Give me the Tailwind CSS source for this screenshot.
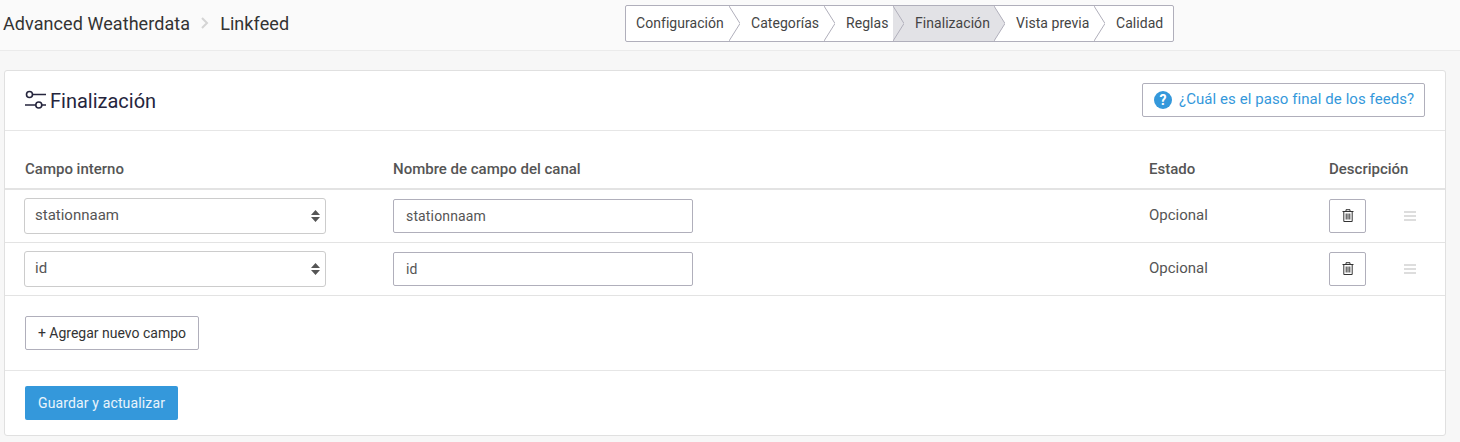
<!DOCTYPE html>
<html lang="es">
  <head>
    <meta charset="UTF-8" />
    <title>Linkfeed</title>
    <script src="https://cdn.jsdelivr.net/npm/@tailwindcss/browser@4"></script>
  </head>
  <body class="bg-[#f7f7f7] font-['Roboto',sans-serif] text-[14px] text-[#333] h-[442px] overflow-hidden">
    <!-- Top bar -->
    <header class="h-[51px] bg-[#fafafa] border-b border-[#ebebeb] flex items-start pl-[3px] relative">
      <div class="flex items-center h-[46px] text-[18px] tracking-[0.07px] text-[#333]">
        <span>Advanced Weatherdata</span>
        <svg class="mx-[11px] w-[8px] h-[12px]" viewBox="0 0 8 12" fill="none" stroke="#d4d4d4" stroke-width="2"><path d="M1 1l5 5-5 5" /></svg>
        <span>Linkfeed</span>
      </div>

      <!-- Steps -->
      <nav class="absolute left-[625px] top-[5px] h-[37px] w-[549px] flex bg-white border border-[#b0afbb] rounded-[2px] text-[#444] leading-[35px] tracking-[0.05px]">
        <div class="relative w-[103px] pl-[10px]">
          Configuración
          <svg class="absolute left-full top-0 w-[11px] h-[35px] z-10" viewBox="0 0 11 35" fill="none" stroke="#b0afbb"><path d="M0 0l11 17.5L0 35" /></svg>
        </div>
        <div class="relative w-[95px] pl-[22px]">
          Categorías
          <svg class="absolute left-full top-0 w-[11px] h-[35px] z-10" viewBox="0 0 11 35" fill="none" stroke="#b0afbb"><path d="M0 0l11 17.5L0 35" /></svg>
        </div>
        <div class="relative w-[69px] pl-[22px]">
          Reglas
          <svg class="absolute left-full top-0 w-[11px] h-[35px] z-10" viewBox="0 0 11 35" fill="none" stroke="#b0afbb"><path d="M0 0l11 17.5L0 35" /></svg>
        </div>
        <div class="relative w-[101px] pl-[22px] bg-[#e2e2e6]">
          Finalización
          <svg class="absolute left-full top-0 w-[11px] h-[35px] z-10" viewBox="0 0 11 35" fill="#e2e2e6" stroke="#b0afbb"><path d="M0 0l11 17.5L0 35" /></svg>
        </div>
        <div class="relative w-[100px] pl-[22px]">
          Vista previa
          <svg class="absolute left-full top-0 w-[11px] h-[35px] z-10" viewBox="0 0 11 35" fill="none" stroke="#b0afbb"><path d="M0 0l11 17.5L0 35" /></svg>
        </div>
        <div class="pl-[22px]">Calidad</div>
      </nav>
    </header>

    <!-- Card -->
    <main class="mt-[19px] mx-[4px] w-[1442px] h-[366px] bg-white border border-[#e0e0e0] rounded-[3px]">
      <div class="h-[60px] border-b border-[#e6e6e6] flex items-center justify-between pl-[20px] pr-[20px]">
        <h1 class="flex items-center text-[20px] text-[#25253d] font-normal">
          <svg class="w-[21px] h-[18px] mr-[4px] overflow-visible" viewBox="0 0 21 18" fill="none" stroke="#25253d" stroke-width="1.6">
            <circle cx="4.5" cy="2.5" r="3" />
            <path d="M7.5 2.5H21M0 13h10.8M16.8 13H21" />
            <circle cx="13.8" cy="13" r="3" />
          </svg>
          Finalización
        </h1>
        <a class="h-[34px] w-[283px] mt-[-2px] flex items-center pl-[11px] border border-[#b0afbb] rounded-[2px] text-[#3498db] text-[15px] tracking-[0.07px]">
          <span class="w-[18px] h-[18px] mr-[7px] rounded-full bg-[#3498db] text-white text-[14px] font-bold flex items-center justify-center leading-none">?</span>
          ¿Cuál es el paso final de los feeds?
        </a>
      </div>

      <div class="grid grid-cols-[368px_756px_180px_1fr] pl-[20px] h-[59px] pt-[28px] leading-[20px] border-b-2 border-[#e3e3e3] text-[15px] font-medium text-[#555]">
        <div>Campo interno</div>
        <div>Nombre de campo del canal</div>
        <div>Estado</div>
        <div>Descripción</div>
      </div>

      <div class="grid grid-cols-[368px_756px_180px_1fr] items-center pl-[20px] h-[53px] border-b border-[#e3e3e3] text-[15px] text-[#555]">
        <div class="relative -ml-px w-[302px] mt-[-1px]">
          <select class="appearance-none w-full h-[36px] pl-[10px] border border-[#ccc] rounded-[3px] bg-white text-[#555]"><option>stationnaam</option></select>
          <svg class="absolute right-[6px] top-[12px] w-[9px] h-[12px]" viewBox="0 0 9 12" fill="#555"><path d="M4.5 0L9 5H0zM4.5 12L0 7h9z" /></svg>
        </div>
        <input class="w-[300px] h-[34px] pl-[12px] border border-[#b0afbb] rounded-[2px] text-[14px] tracking-[0.15px] text-[#555] mt-[-1px]" value="stationnaam" />
        <div class="mt-[-1px]">Opcional</div>
        <div class="flex items-center mt-[-1px]">
          <button class="w-[37px] h-[34px] border border-[#b0afbb] rounded-[2px] flex items-center justify-center">
            <svg class="w-[12px] h-[13px]" viewBox="0 0 12 13" fill="none" stroke="#333" stroke-width="1"><path d="M0.5 2.5h11M4 2.5V.7h4v1.8M1.8 2.5v10h8.4v-10M4.2 4.5v6M6 4.5v6M7.8 4.5v6" /></svg>
          </button>
          <div class="ml-[38px] w-[12px] h-[10px] flex flex-col justify-between">
            <div class="h-[2px] bg-[#ddd]"></div>
            <div class="h-[2px] bg-[#ddd]"></div>
            <div class="h-[2px] bg-[#ddd]"></div>
          </div>
        </div>
      </div>

      <div class="grid grid-cols-[368px_756px_180px_1fr] items-center pl-[20px] h-[53px] border-b border-[#e3e3e3] text-[15px] text-[#555]">
        <div class="relative -ml-px w-[302px] mt-[-1px]">
          <select class="appearance-none w-full h-[36px] pl-[10px] border border-[#ccc] rounded-[3px] bg-white text-[#555]"><option>id</option></select>
          <svg class="absolute right-[6px] top-[12px] w-[9px] h-[12px]" viewBox="0 0 9 12" fill="#555"><path d="M4.5 0L9 5H0zM4.5 12L0 7h9z" /></svg>
        </div>
        <input class="w-[300px] h-[34px] pl-[12px] border border-[#b0afbb] rounded-[2px] text-[14px] tracking-[0.15px] text-[#555] mt-[-1px]" value="id" />
        <div class="mt-[-1px]">Opcional</div>
        <div class="flex items-center mt-[-1px]">
          <button class="w-[37px] h-[34px] border border-[#b0afbb] rounded-[2px] flex items-center justify-center">
            <svg class="w-[12px] h-[13px]" viewBox="0 0 12 13" fill="none" stroke="#333" stroke-width="1"><path d="M0.5 2.5h11M4 2.5V.7h4v1.8M1.8 2.5v10h8.4v-10M4.2 4.5v6M6 4.5v6M7.8 4.5v6" /></svg>
          </button>
          <div class="ml-[38px] w-[12px] h-[10px] flex flex-col justify-between">
            <div class="h-[2px] bg-[#ddd]"></div>
            <div class="h-[2px] bg-[#ddd]"></div>
            <div class="h-[2px] bg-[#ddd]"></div>
          </div>
        </div>
      </div>

      <div class="h-[75px] border-b border-[#e6e6e6] pl-[20px] pt-[20px]">
        <button class="h-[34px] w-[174px] border border-[#b0afbb] rounded-[2px] text-[#333]">+ Agregar nuevo campo</button>
      </div>
      <div class="pl-[20px] pt-[15px]">
        <button class="h-[34px] w-[153px] bg-[#3498db] rounded-[2px] text-white/90 tracking-[0.14px]">Guardar y actualizar</button>
      </div>
    </main>
  </body>
</html>
